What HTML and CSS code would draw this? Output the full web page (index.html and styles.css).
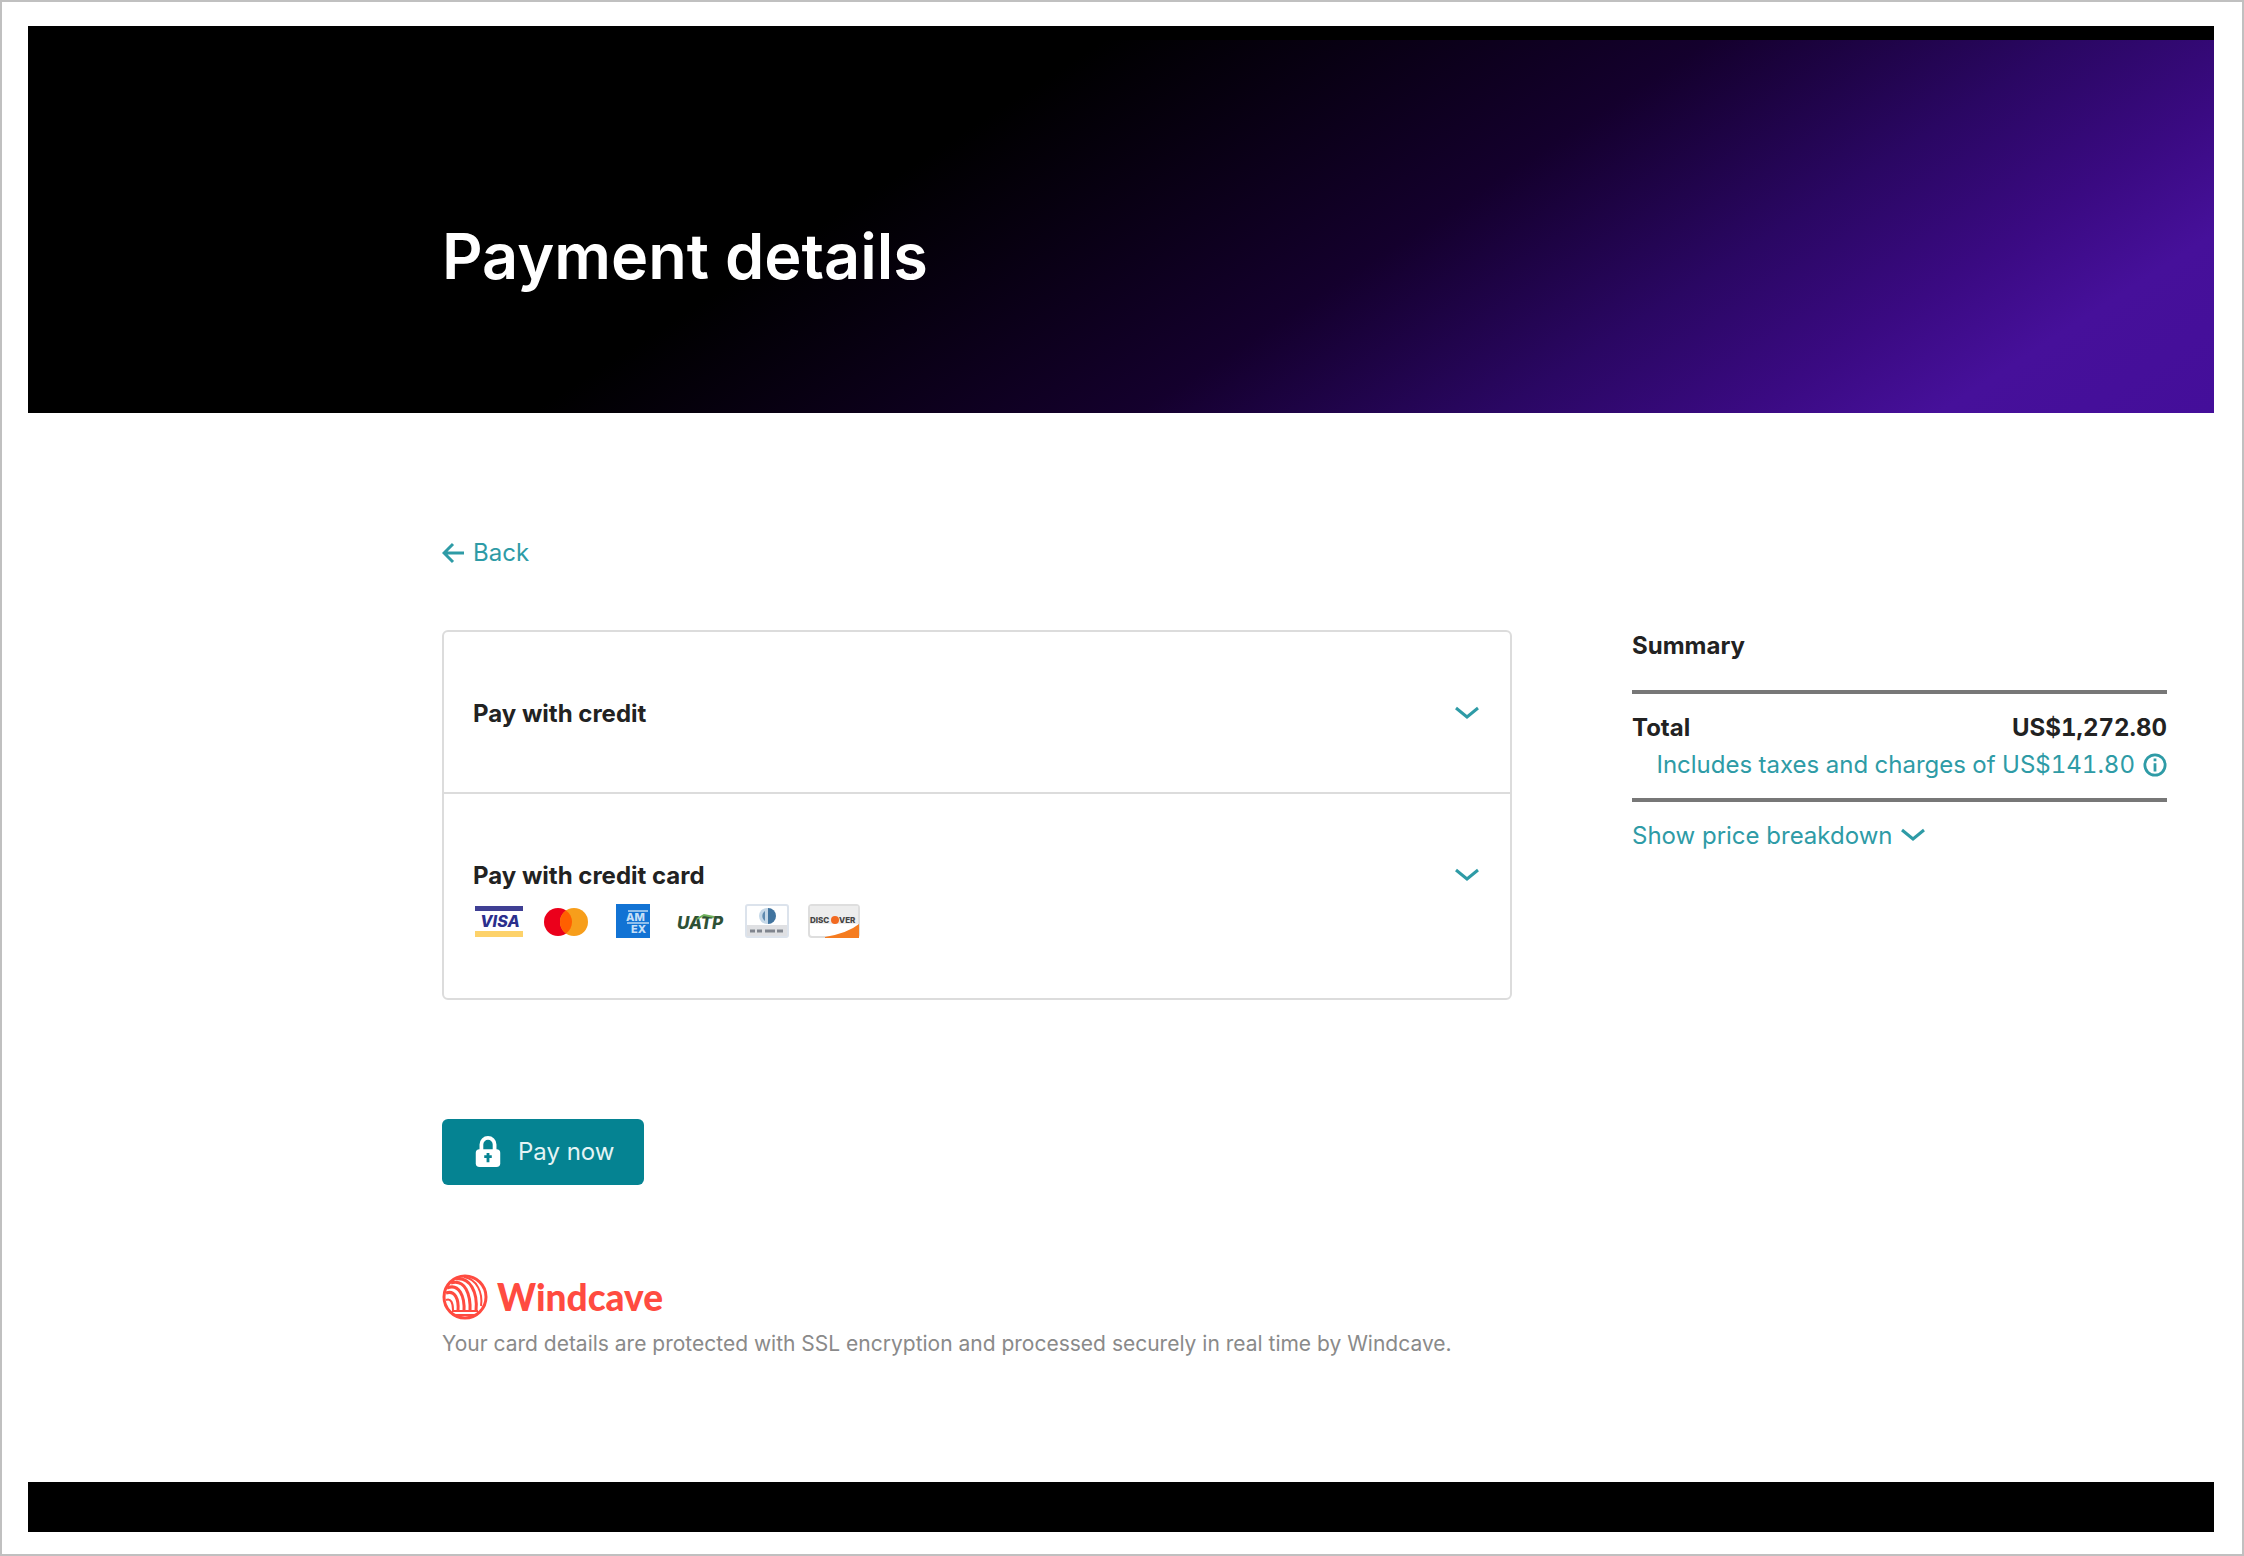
FILE: index.html
```html
<!DOCTYPE html>
<html lang="en">
<head>
  <meta charset="UTF-8" />
  <meta name="viewport" content="width=device-width, initial-scale=1.0" />
  <title>Payment details</title>
  <link rel="stylesheet" href="styles.css">
</head>
<body>
<div class="page">
  <header class="hero">
    <h1>Payment details</h1>
  </header>

  <main class="content">
    <a class="back-link" href="#">
      <svg width="23" height="22" viewBox="0 0 23 22" fill="none" stroke="currentColor" stroke-width="3" aria-hidden="true">
        <path d="M11 2 L2 11 L11 20 M2 11 H22" />
      </svg>
      Back
    </a>

    <div class="columns">
      <!-- Payment methods -->
      <section class="methods">
        <button class="method" type="button" aria-expanded="false">
          <span class="method-name">Pay with credit</span>
          <svg class="chevron" viewBox="0 0 26 16" aria-hidden="true"><path d="M2 3 L13 12 L24 3" /></svg>
        </button>
        <button class="method" type="button" aria-expanded="false">
          <span class="method-label">
            <span class="method-name">Pay with credit card</span>
            <span class="cards">
              <!-- Visa -->
              <svg width="50" height="34" viewBox="0 0 50 34" aria-label="Visa">
                <rect x="1" y="2" width="48" height="5" fill="#3f3f94" />
                <rect x="1" y="27" width="48" height="6" fill="#fdd26a" />
                <text class="visa-text" x="26" y="23" text-anchor="middle">VISA</text>
              </svg>
              <!-- Mastercard -->
              <svg width="44" height="34" viewBox="0 0 44 34" aria-label="Mastercard">
                <circle cx="14" cy="18" r="14" fill="#eb001b" />
                <circle cx="30" cy="18" r="14" fill="#f79e1b" />
                <path d="M22 6.500 A14 14 0 0 1 22 29.500 A14 14 0 0 1 22 6.500 Z" fill="#ff5f00" />
              </svg>
              <!-- American Express -->
              <svg width="34" height="34" viewBox="0 0 34 34" aria-label="American Express">
                <rect width="34" height="34" fill="#1273d4" />
                <text class="amex-text" x="10" y="17">AM</text>
                <text class="amex-text" x="15" y="29">EX</text>
                <path d="M11 19 H33 M12 7 H32" stroke="#8fbfec" stroke-width="2" />
              </svg>
              <!-- UATP -->
              <svg width="48" height="34" viewBox="0 0 48 34" aria-label="UATP">
                <text class="uatp-text" x="24" y="25" text-anchor="middle">UATP</text>
                <path d="M21 15 L28 11 L38 13" fill="none" stroke="#71b35d" stroke-width="2" />
              </svg>
              <!-- Diners Club -->
              <svg width="44" height="34" viewBox="0 0 44 34" aria-label="Diners Club">
                <rect x="1" y="1" width="42" height="32" rx="2" fill="#fff" stroke="#dce3ec" stroke-width="2" />
                <rect x="2" y="21" width="40" height="11" fill="#dfe0e3" />
                <circle cx="22" cy="12" r="8" fill="#c5d8e8" />
                <path d="M23 4 A8 8 0 0 1 23 20 Z" fill="#41749f" />
                <path d="M20 7 A6 6 0 0 0 20 17 Z" fill="#5f8bb0" />
                <path d="M5 27 H10 M12 27 H17 M20 27 H30 M32 27 H38" stroke="#80858e" stroke-width="3" />
              </svg>
              <!-- Discover -->
              <svg width="52" height="34" viewBox="0 0 52 34" aria-label="Discover">
                <rect x="1" y="1" width="50" height="32" rx="3" fill="#fff" stroke="#dedede" stroke-width="2" />
                <rect x="2" y="2" width="48" height="18" fill="#ededed" />
                <path d="M17 33 Q40 29 51 20 V34 H17 Z" fill="#f57c20" />
                <text class="discover-text" x="2" y="19">DISC</text>
                <circle cx="27" cy="16" r="4" fill="#f26a21" />
                <text class="discover-text" x="31" y="19">VER</text>
              </svg>
            </span>
          </span>
          <svg class="chevron" viewBox="0 0 26 16" aria-hidden="true"><path d="M2 3 L13 12 L24 3" /></svg>
        </button>
      </section>

      <!-- Summary -->
      <aside class="summary">
        <h2>Summary</h2>
        <div class="summary-box">
          <div class="total">
            <span>Total</span>
            <span>US$1,272.80</span>
          </div>
          <a class="taxes" href="#">
            Includes taxes and charges of US$141.80
            <svg width="24" height="24" viewBox="0 0 26 26" fill="none" stroke="currentColor" aria-hidden="true">
              <circle cx="13" cy="13" r="11" stroke-width="3" />
              <path d="M13 11 V20 M13 6 V9" stroke-width="3" />
            </svg>
          </a>
        </div>
        <button class="breakdown" type="button" aria-expanded="false">
          Show price breakdown
          <svg class="chevron" viewBox="0 0 26 16" aria-hidden="true"><path d="M2 3 L13 12 L24 3" /></svg>
        </button>
      </aside>
    </div>

    <button class="pay-btn" type="button">
      <svg width="28" height="32" viewBox="0 0 28 34" aria-hidden="true">
        <path d="M7 16 V9 A7 7 0 0 1 21 9 V16" fill="none" stroke="#fff" stroke-width="4" />
        <rect x="1" y="14" width="26" height="19" rx="4" fill="#fff" />
        <path d="M14 18 V28 M10 22 H18" stroke="#058392" stroke-width="3" />
      </svg>
      Pay now
    </button>

    <div class="windcave">
      <svg width="46" height="46" viewBox="0 0 46 46" fill="none" stroke="#ff4b40" aria-hidden="true">
        <circle cx="23" cy="23" r="21" stroke-width="3" />
        <path d="M4 19 C13 16 17 25 16 37" stroke-width="3" />
        <path d="M5 14 C17 9 23 22 22 38" stroke-width="3" />
        <path d="M9 9 C23 5 29 20 28 38" stroke-width="3" />
        <path d="M14 5 C28 3 36 18 34 37" stroke-width="3" />
        <path d="M4 26 C9 24 11 29 11 36" stroke-width="2" />
        <path d="M22 3 C35 5 41 19 39 32" stroke-width="2" />
        <path d="M10 37 H36 M14 41 H32" stroke-width="2" />
      </svg>
      <span>Windcave</span>
    </div>
    <p class="notice">Your card details are protected with SSL encryption and processed securely in real time by Windcave.</p>
  </main>

  <footer class="footer"></footer>
</div>
</body>
</html>
```

FILE: styles.css
```css
* { box-sizing: border-box; margin: 0; padding: 0; }
body {
  font-family: Inter, "Liberation Sans", sans-serif;
  font-size: 24px;
  line-height: 32px;
  color: #222;
  background: #fff;
}
a {
  color: #2e9ba6;
  text-decoration: none;
}
button {
  font: inherit;
  color: inherit;
  background: none;
  border: none;
  cursor: pointer;
}
svg {
  flex-shrink: 0;
}
.page {
  display: flex;
  flex-direction: column;
  min-height: 100vh;
  border: 2px solid #c0c0c0;
  padding: 24px 28px 22px 26px;
}

.hero {
  border-top: 14px solid #000;
  padding: 176px 414px 117px;
  background: linear-gradient(147deg, #000 39%, #14002d 61%, #2a0763 74%, #3a0a82 83%, #46109a 90%, #440e9a 100%);
}
.hero h1 {
  font-size: 63px;
  line-height: 80px;
  font-weight: 600;
  color: #fff;
}

.content {
  flex: 1;
  padding: 124px 47px 0 414px;
}
.back-link {
  display: inline-flex;
  align-items: center;
  gap: 8px;
}
.columns {
  display: grid;
  grid-template-columns: 2fr 1fr;
  gap: 120px;
  align-items: start;
  margin-top: 58px;
}

.methods {
  border: 2px solid #dcdcdc;
  border-radius: 6px;
}
.method {
  display: flex;
  justify-content: space-between;
  align-items: flex-start;
  width: 100%;
  padding: 66px 30px 60px 29px;
  text-align: left;
}
.method:first-child {
  padding-bottom: 62px;
  border-bottom: 2px solid #dcdcdc;
}
.method-label {
  display: flex;
  flex-direction: column;
  gap: 12px;
}
.method-name {
  font-weight: 700;
}
.chevron {
  width: 26px;
  height: 16px;
  margin-top: 7px;
  fill: none;
  stroke: #2e9ba6;
  stroke-width: 3;
}

.cards {
  display: grid;
  grid-template-columns: repeat(6, 52px);
  column-gap: 15px;
  justify-items: center;
}
.visa-text {
  font-size: 16px;
  font-weight: 800;
  font-style: italic;
  fill: #2b2f8c;
}
.amex-text {
  font-size: 11px;
  font-weight: 800;
  fill: #c5dff7;
}
.uatp-text {
  font-size: 17px;
  font-weight: 800;
  font-style: italic;
  fill: #2e5136;
}
.discover-text {
  font-size: 8px;
  font-weight: 800;
  fill: #444;
}

.summary h2 {
  font-size: 24px;
  line-height: 32px;
  font-weight: 700;
}
.summary-box {
  margin: 28px 0 18px;
  padding: 18px 0 17px;
  border-top: 4px solid #777;
  border-bottom: 4px solid #777;
  font-variant-numeric: tabular-nums;
}
.total {
  display: flex;
  justify-content: space-between;
  font-weight: 700;
}
.taxes {
  display: flex;
  justify-content: flex-end;
  align-items: center;
  gap: 8px;
  margin-top: 5px;
  white-space: nowrap;
}
.breakdown {
  display: flex;
  gap: 8px;
  color: #2e9ba6;
}

.pay-btn {
  display: flex;
  align-items: center;
  gap: 16px;
  margin-top: 119px;
  padding: 17px 30px 17px 32px;
  border-radius: 6px;
  color: #e4f4f5;
  background: #058392;
}

.windcave {
  display: flex;
  align-items: center;
  gap: 9px;
  margin-top: 89px;
  font-family: Lato, sans-serif;
  font-size: 37px;
  line-height: 46px;
  font-weight: 900;
  color: #ff4b40;
}
.notice {
  margin-top: 8px;
  font-size: 21px;
  color: #8a8a8a;
}

.footer {
  height: 50px;
  background: #000;
}
```
